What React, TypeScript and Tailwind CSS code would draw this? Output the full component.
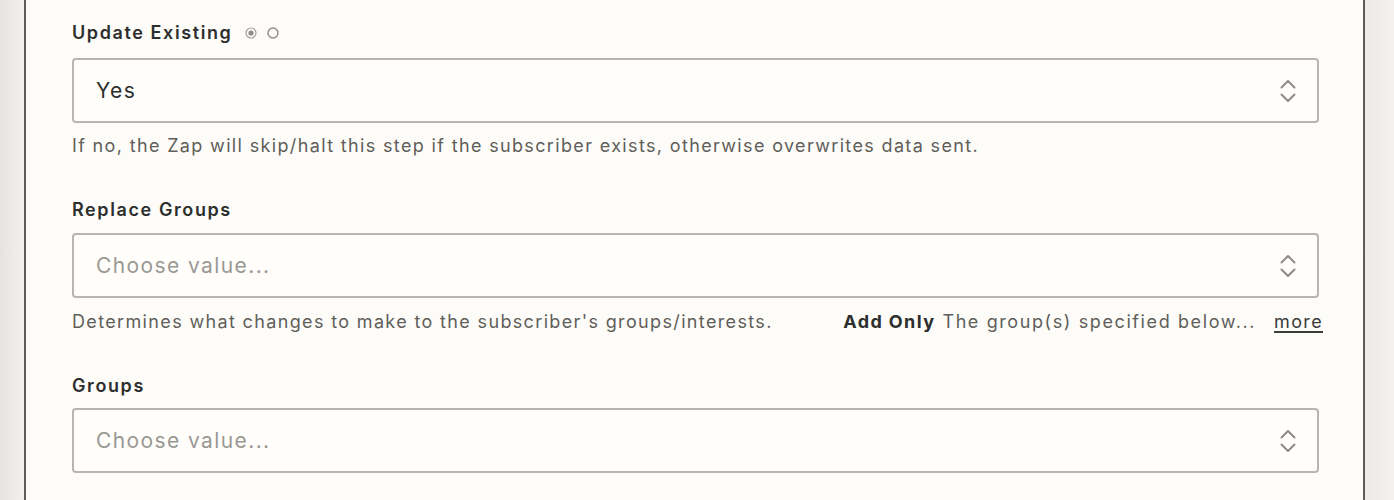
import React from "react";

function Chevrons() {
  return (
    <svg width="18" height="26" viewBox="0 0 18 26" fill="none" className="shrink-0">
      <path d="M2.5 9.5 L9 3 L15.5 9.5" stroke="#8d8b87" strokeWidth="2" strokeLinecap="round" strokeLinejoin="round" />
      <path d="M2.5 16.5 L9 23 L15.5 16.5" stroke="#8d8b87" strokeWidth="2" strokeLinecap="round" strokeLinejoin="round" />
    </svg>
  );
}

function Select({ value, placeholder }: { value?: string; placeholder?: string }) {
  return (
    <div className="flex h-[65px] items-center justify-between rounded-[4px] border-2 border-[#b7b5b0] bg-[#fffefb] pl-[22px] pr-[20px]">
      <span
        className={
          value
            ? "text-[21px] tracking-[1.4px] text-[#2d2e2e]"
            : "text-[21px] tracking-[1.4px] text-[#9a9893]"
        }
      >
        {value ?? placeholder}
      </span>
      <Chevrons />
    </div>
  );
}

export default function App() {
  return (
    <div
      className="flex h-[500px] w-[1394px] overflow-hidden bg-[#fdfcf8]"
      style={{ fontFamily: "Inter, 'Noto Sans', sans-serif" }}
    >
      <div className="w-[24px] shrink-0 bg-gradient-to-r from-[#e4e3df] to-[#f3f2ee]" />
      <div className="flex-1 border-x-2 border-[#5d5c5a] bg-[#fdfcf8] pl-[46px] pr-[44px] pt-[21px]">
        {/* Field 1 */}
        <div className="flex h-[24px] items-center gap-[13px]">
          <span className="text-[18px] font-semibold leading-[24px] tracking-[1.6px] text-[#2d2e2e]">Update Existing</span>
          <span className="flex items-center gap-[10px]">
            <svg width="12" height="12" viewBox="0 0 12 12">
              <circle cx="6" cy="6" r="5" fill="none" stroke="#a3a19d" strokeWidth="1.2" />
              <circle cx="6" cy="6" r="2.6" fill="#8f8d89" />
            </svg>
            <svg width="12" height="12" viewBox="0 0 12 12">
              <circle cx="6" cy="6" r="5" fill="none" stroke="#8f8d89" strokeWidth="1.4" />
            </svg>
          </span>
        </div>
        <div className="mt-[13px]">
          <Select value="Yes" />
        </div>
        <p className="mt-[11px] text-[18px] leading-[24px] tracking-[1.35px] text-[#5f5e5a]">
          If no, the Zap will skip/halt this step if the subscriber exists, otherwise overwrites data sent.
        </p>

        {/* Field 2 */}
        <div className="mt-[40px] text-[18px] font-semibold leading-[24px] tracking-[1.6px] text-[#2d2e2e]">Replace Groups</div>
        <div className="mt-[11px]">
          <Select placeholder="Choose value..." />
        </div>
        <div className="mr-[-4px] mt-[12px] flex items-center justify-between text-[18px] leading-[24px] tracking-[1.35px] text-[#5f5e5a]">
          <span>Determines what changes to make to the subscriber's groups/interests.</span>
          <span className="flex items-center">
            <span className="font-bold tracking-[1.4px] text-[#2d2e2e]">Add Only</span>
            <span className="ml-[7px] tracking-[1.6px]">The group(s) specified below...</span>
            <span className="ml-[18px] text-[#3a3b3b] underline decoration-[1.5px] underline-offset-[3px]">more</span>
          </span>
        </div>

        {/* Field 3 */}
        <div className="mt-[40px] text-[18px] font-semibold leading-[24px] tracking-[1.6px] text-[#2d2e2e]">Groups</div>
        <div className="mt-[10px]">
          <Select placeholder="Choose value..." />
        </div>
      </div>
      <div className="w-[29px] shrink-0 bg-gradient-to-r from-[#eceae6] to-[#f3f2ee]" />
    </div>
  );
}
